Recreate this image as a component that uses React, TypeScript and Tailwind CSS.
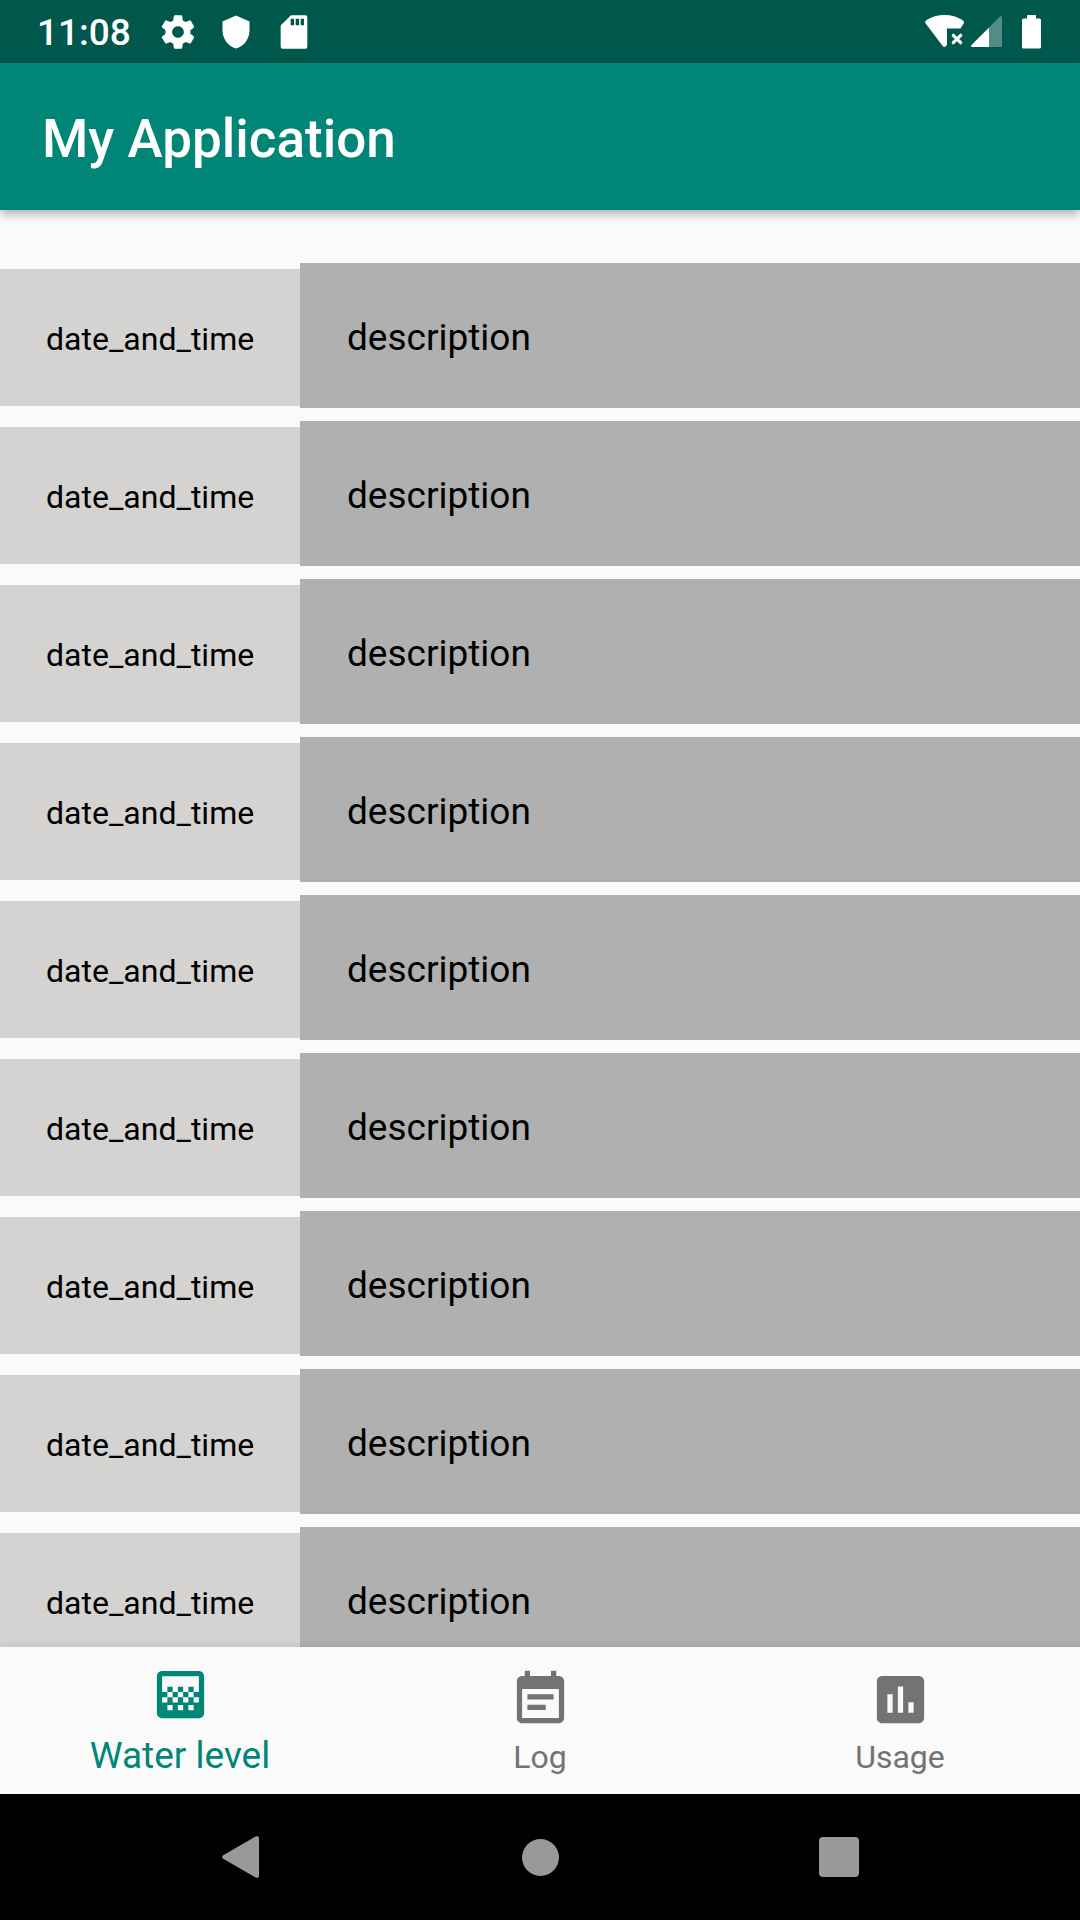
import { useState } from "react";

const SETTINGS =
  "M19.43 12.98c.04-.32.07-.64.07-.98s-.03-.66-.07-.98l2.11-1.65c.19-.15.24-.42.12-.64l-2-3.46c-.12-.22-.39-.3-.61-.22l-2.49 1c-.52-.4-1.08-.73-1.69-.98l-.38-2.65C14.46 2.18 14.25 2 14 2h-4c-.25 0-.46.18-.49.42l-.38 2.65c-.61.25-1.17.59-1.69.98l-2.49-1c-.23-.09-.49 0-.61.22l-2 3.46c-.13.22-.07.49.12.64l2.11 1.65c-.04.32-.07.65-.07.98s.03.66.07.98l-2.11 1.65c-.19.15-.24.42-.12.64l2 3.46c.12.22.39.3.61.22l2.49-1c.52.4 1.08.73 1.69.98l.38 2.65c.03.24.24.42.49.42h4c.25 0 .46-.18.49-.42l.38-2.65c.61-.25 1.17-.59 1.69-.98l2.49 1c.23.09.49 0 .61-.22l2-3.46c.12-.22.07-.49-.12-.64l-2.11-1.65zM12 15.5c-1.93 0-3.5-1.57-3.5-3.5s1.57-3.5 3.5-3.5 3.5 1.57 3.5 3.5-1.57 3.5-3.5 3.5z";
const SHIELD = "M12 1L3 5v6c0 5.55 3.84 10.74 9 12 5.16-1.26 9-6.45 9-12V5l-9-4z";
const SD_CARD =
  "M18.800 2H10.200L4.400 7.600Q4 8 4 8.600V20.800Q4 22 5.200 22H18.800Q20 22 20 20.800V3.200Q20 2 18.800 2zM12 8h-2V4h2v4zm3 0h-2V4h2v4zm3 0h-2V4h2v4z";
const GRADIENT =
  "M11 9h2v2h-2zm-2 2h2v2H9zm4 0h2v2h-2zm2-2h2v2h-2zM7 9h2v2H7zm12-6H5c-1.1 0-2 .9-2 2v14c0 1.1.9 2 2 2h14c1.1 0 2-.9 2-2V5c0-1.1-.9-2-2-2zM9 18H7v-2h2v2zm4 0h-2v-2h2v2zm4 0h-2v-2h2v2zm2-7h-2v2h2v2h-2v-2h-2v2h-2v-2h-2v2H9v-2H7v2H5v-2h2v-2H5V5h14v6z";
const EVENT_NOTE =
  "M17 10H7v2h10v-2zm2-7h-1V1h-2v2H8V1H6v2H5c-1.11 0-1.99.9-1.99 2L3 19c0 1.1.89 2 2 2h14c1.1 0 2-.9 2-2V5c0-1.1-.9-2-2-2zm0 16H5V8h14v11zm-5-5H7v2h7v-2z";
const ASSESSMENT =
  "M19 3H5c-1.1 0-2 .9-2 2v14c0 1.1.9 2 2 2h14c1.1 0 2-.9 2-2V5c0-1.1-.9-2-2-2zM9 17H7v-7h2v7zm4 0h-2V7h2v10zm4 0h-2v-4h2v4z";

function Icon({ d, className }: { d: string; className: string }) {
  return (
    <svg viewBox="0 0 24 24" className={className} fill="currentColor" aria-hidden="true">
      <path d={d} />
    </svg>
  );
}

function StatusBar() {
  return (
    <div className="flex h-[63px] shrink-0 items-center justify-between bg-[#00574b] pr-[39px] pl-[37px] text-white">
      <div className="flex items-center">
        <span className="pt-0.5 text-[37px] leading-[44px] font-medium">11:08</span>
        <div className="ml-[27px] flex items-center gap-[18px]">
          <Icon d={SETTINGS} className="size-10" />
          <Icon d={SHIELD} className="mx-0.5 size-9" />
          <Icon d={SD_CARD} className="size-10" />
        </div>
      </div>
      <div className="flex items-center">
        <svg viewBox="0 0 40 34" className="mr-1.5 h-[34px] w-10" aria-hidden="true">
          <path
            fill="currentColor"
            d="M1 9C-.2 7.800 0 6.300 1.200 5.300C6.500 1.700 12.900 0 19.500 0S32.500 1.700 37.800 5.300C39.200 6.300 39.400 7.600 38.400 9L35.500 13.500H22V29.500L21 31C20.200 32.300 18.800 32.300 17.900 31.200Z"
          />
          <path d="M28.300 20.300L35.700 27.700M35.700 20.300L28.300 27.700" stroke="currentColor" strokeWidth="3.200" strokeLinecap="round" />
        </svg>
        <svg viewBox="0 0 31 31" className="mr-5 size-[31px]" fill="currentColor" aria-hidden="true">
          <path opacity=".32" d="M18 11.500L28.800.7C29.700-.2 31 .3 31 1.600V29.500Q31 31 29.500 31H18Z" />
          <path d="M18 11.500V31H1.200C-.1 31-.4 29.800.5 28.900Z" />
        </svg>
        <svg viewBox="0 0 19 34" className="h-[34px] w-[19px]" fill="currentColor" aria-hidden="true">
          <path d="M5 0H14V3.500H17.500Q19 3.500 19 5V32Q19 33.500 17.500 33.500H1.500Q0 33.500 0 32V5Q0 3.500 1.500 3.500H5Z" />
        </svg>
      </div>
    </div>
  );
}

const entries = Array.from({ length: 9 }, () => ({
  time: "date_and_time",
  description: "description",
}));

function LogRow({ time, description }: { time: string; description: string }) {
  return (
    <li className="flex shrink-0 items-start">
      <div className="mt-1.5 w-[300px] shrink-0 bg-[#d4d3d1] pt-[51px] pb-12 pl-[46px] text-[32px] leading-[38px]">
        {time}
      </div>
      <div className="flex-1 bg-[#b0b0b0] pt-[53px] pb-12 pl-[47px] text-[37px] leading-[44px]">
        {description}
      </div>
    </li>
  );
}

const tabs = [
  { label: "Water level", icon: GRADIENT },
  { label: "Log", icon: EVENT_NOTE },
  { label: "Usage", icon: ASSESSMENT },
];

export default function App() {
  const [active, setActive] = useState(0);
  return (
    <div className="flex h-screen flex-col overflow-hidden bg-[#fafafa] font-[Roboto,sans-serif] text-black">
      <StatusBar />
      <header className="z-10 flex h-[147px] shrink-0 items-center bg-[#008577] px-[42px] shadow-[0_4px_9px_rgba(0,0,0,0.3)]">
        <h1 className="pt-1 text-[53px] leading-[62px] font-medium text-white">My Application</h1>
      </header>
      <main className="min-h-0 flex-1 overflow-hidden pt-[53px]">
        <ul className="flex flex-col gap-[13px]">
          {entries.map((entry, i) => (
            <LogRow key={i} {...entry} />
          ))}
        </ul>
      </main>
      <nav className="z-10 grid h-[147px] shrink-0 grid-cols-3 bg-[#fafafa] shadow-[0_0_8px_rgba(0,0,0,0.12)]">
        {tabs.map((tab, i) => (
          <button
            key={tab.label}
            type="button"
            onClick={() => setActive(i)}
            className={
              i === active
                ? "flex flex-col items-center gap-2 pt-4 text-[37px] leading-[44px] text-[#008577]"
                : "flex flex-col items-center gap-[7px] pt-[21px] text-[32px] leading-[38px] text-[#737373]"
            }
          >
            <Icon d={tab.icon} className="size-[63px]" />
            <span>{tab.label}</span>
          </button>
        ))}
      </nav>
      <div className="flex h-[126px] shrink-0 items-center justify-center bg-black text-[#999999]">
        <button type="button" aria-label="Back" className="flex h-full w-[299px] items-center justify-center">
          <svg viewBox="0 0 38 42" className="h-[42px] w-[38px]" fill="currentColor" aria-hidden="true">
            <path d="M1.200 19.300L33.600.6C35.500-.4 37 .4 37 2.500V39.500C37 41.600 35.500 42.400 33.600 41.400L1.200 22.700C-.3 21.800-.3 20.200 1.200 19.300Z" />
          </svg>
        </button>
        <button type="button" aria-label="Home" className="flex h-full w-[299px] items-center justify-center">
          <span className="size-[37px] rounded-full bg-[#999999]" />
        </button>
        <button type="button" aria-label="Overview" className="flex h-full w-[299px] items-center justify-center">
          <span className="size-10 rounded bg-[#999999]" />
        </button>
      </div>
    </div>
  );
}
